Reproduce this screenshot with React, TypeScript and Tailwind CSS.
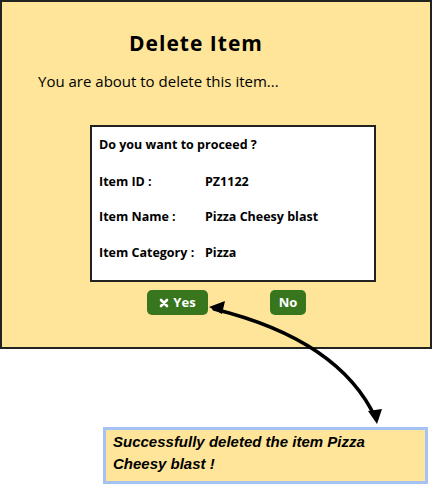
import React from 'react';

const rows = [
  { label: 'Item ID :', value: 'PZ1122' },
  { label: 'Item Name :', value: 'Pizza Cheesy blast' },
  { label: 'Item Category :', value: 'Pizza' },
];

const Arrow = () => (
  <svg className="absolute left-0 top-0 pointer-events-none" width="433" height="485" viewBox="0 0 433 485">
    <path d="M214 309 Q 340 340 376 419" fill="none" stroke="#000" strokeWidth="3.5" strokeLinecap="round" />
    <polygon points="209,307 225,301 222,314" fill="#000" />
    <polygon points="377,424 368,411 382,409" fill="#000" />
  </svg>
);

export default function App() {
  return (
    <div className="relative w-[433px] h-[485px] bg-white overflow-hidden" style={{ fontFamily: '"Open Sans", Lato, sans-serif' }}>
      <div className="w-[432px] h-[349px] bg-[#ffe599] border-2 border-[#222] flex flex-col">
        <h1 className="mt-[27px] text-center text-[21px] leading-[28px] font-bold tracking-[1px] text-black pr-[40px]">Delete Item</h1>
        <p className="mt-[14px] ml-[36px] text-[15px] leading-[20px] text-black">You are about to delete this item...</p>
        <div className="mt-[34px] ml-[88px] w-[286px] h-[157px] bg-white border-2 border-[#222] px-[7px] pt-[10px] font-bold text-black">
          <div className="text-[12.5px] leading-[16px]">Do you want to proceed ?</div>
          <div className="mt-[21px] flex flex-col gap-[19.5px]">
            {rows.map((r) => (
              <div key={r.label} className="flex items-center h-[16px]">
                <span className="w-[106px] text-[12.5px]">{r.label}</span>
                <span className="text-[12.5px]">{r.value}</span>
              </div>
            ))}
          </div>
        </div>
        <div className="mt-[8px] flex">
          <button className="ml-[145px] w-[61px] h-[25px] rounded-[5px] bg-[#38761d] text-white text-[13px] font-bold flex items-center justify-center gap-[4px]">
            <svg width="10" height="10" viewBox="0 0 10 10"><path d="M2 2 L8 8 M8 2 L2 8" stroke="#fff" strokeWidth="2.6" strokeLinecap="round" /></svg>
            Yes
          </button>
          <button className="ml-[62px] w-[36px] h-[25px] rounded-[5px] bg-[#38761d] text-white text-[13px] font-bold flex items-center justify-center">No</button>
        </div>
      </div>
      <div className="mt-[78px] ml-[103px] w-[325px] h-[57px] bg-[#ffe599] border-[3px] border-[#a4c2f4] px-[7px] pt-[1px] text-[15px] font-bold italic leading-[22px] text-black" style={{ fontFamily: '"Liberation Sans", Arial, sans-serif' }}>
        Successfully deleted the item Pizza Cheesy blast !
      </div>
      <Arrow />
    </div>
  );
}
